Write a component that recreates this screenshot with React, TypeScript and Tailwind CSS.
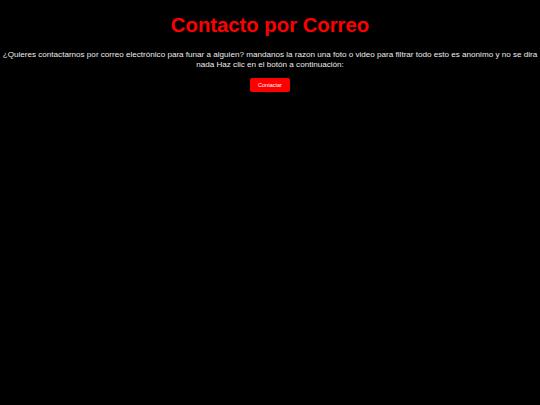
export default function App() {
  return (
    <div className="min-h-[405px] w-full bg-black text-center" style={{ fontFamily: '"Liberation Sans", Arial, sans-serif' }}>
      <h1 className="pt-[12px] text-[20.3px] font-bold leading-[26px] text-[#f00]">Contacto por Correo</h1>
      <p className="mt-[12px] text-[8.1px] leading-[9.5px] text-[#ececec]">
        ¿Quieres contactarnos por correo electrónico para funar a alguien? mandanos la razon una foto o video para filtrar todo esto es anonimo y no se dira nada Haz clic en el botón a continuación:
      </p>
      <button className="mt-[9px] h-[14px] rounded-[2px] bg-[#f00] px-[8px] text-[5.5px] leading-[14px] text-white">Contactar</button>
    </div>
  );
}
